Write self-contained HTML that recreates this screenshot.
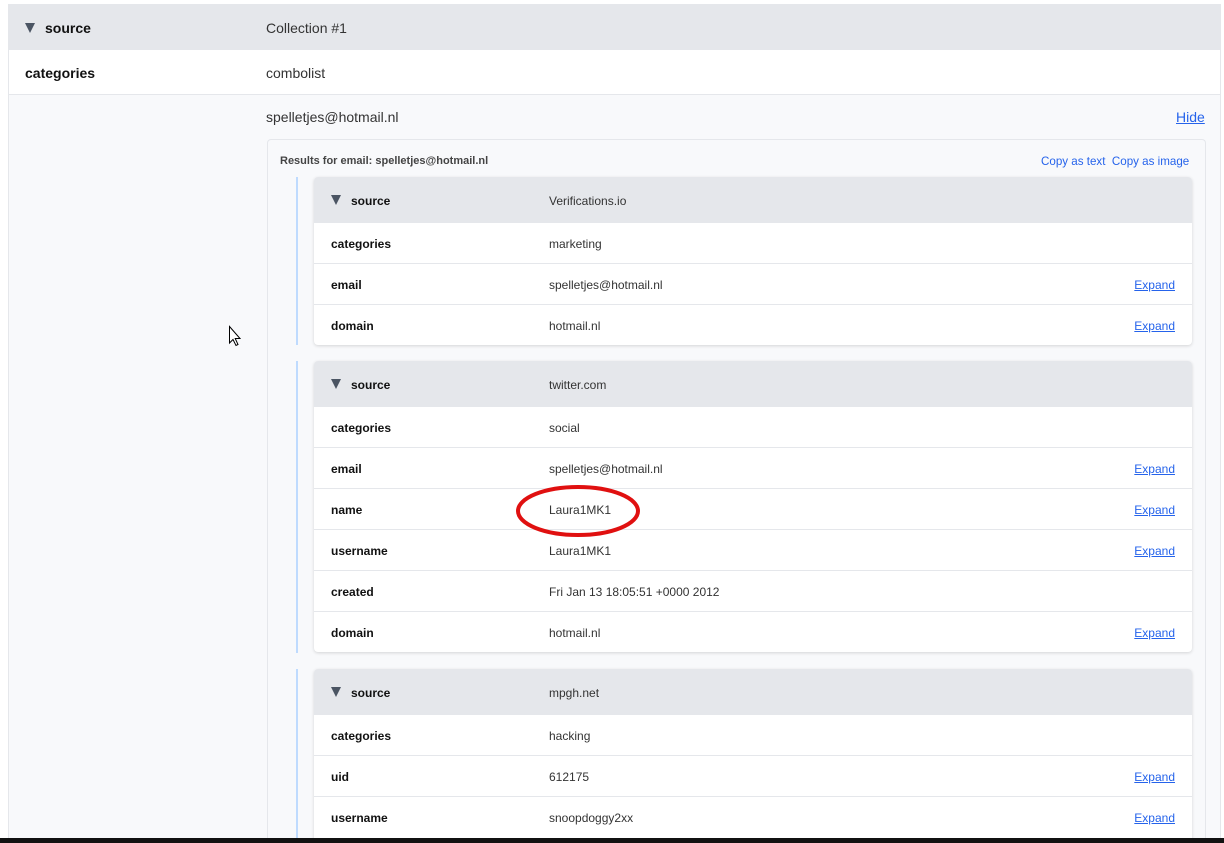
<!DOCTYPE html>
<html style="width:1224px;height:843px;overflow:hidden"><head><meta charset="utf-8"><style>
*{box-sizing:border-box;margin:0;padding:0}
body{width:1224px;height:843px;overflow:hidden;background:#fff;font-family:"Liberation Sans",sans-serif;color:#222;position:relative}
.a{position:absolute}
.row{position:absolute;display:flex;align-items:center}
.k{font-weight:bold;color:#111}
.lnk{color:#2563eb;text-decoration:underline}
.tri{display:inline-block;width:0;height:0;border-left:5px solid transparent;border-right:5px solid transparent;border-top:10px solid #4b5563;margin-right:10px}
.t{position:absolute;left:314px;width:878px;background:#fff;border-radius:4px;box-shadow:0 1px 3px rgba(0,0,0,.15);overflow:hidden}
.t .r{height:41px;border-top:1px solid #e5e7eb;display:flex;align-items:center;font-size:12px;position:relative;padding-top:2px}
.t .r.h{background:#e5e7eb;height:45px;border-top:none}
.t .c1{position:absolute;left:17px;font-weight:bold;color:#111}
.t .c2{position:absolute;left:235px;color:#333}
.t .c3{position:absolute;right:17px;color:#2563eb;text-decoration:underline}
.bar{position:absolute;left:296px;width:2px;background:#bfdbfe}
</style></head><body>
<div class="a" style="left:8px;top:4px;width:1213px;height:839px;border:1px solid #e5e7eb;background:#f8f9fb"></div>
<div class="a" style="left:9px;top:5px;width:1211px;height:45px;background:#e5e7eb"></div>
<div class="a" style="left:9px;top:50px;width:1211px;height:45px;background:#fff;border-bottom:1px solid #e5e7eb"></div>
<div class="row k" style="left:25px;top:5px;height:45px;font-size:14px"><span class="tri"></span>source</div>
<div class="row" style="left:266px;top:5px;height:45px;font-size:14px;color:#333">Collection #1</div>
<div class="row k" style="left:25px;top:50px;height:45px;font-size:14px">categories</div>
<div class="row" style="left:266px;top:50px;height:45px;font-size:14px;color:#333">combolist</div>
<div class="row" style="left:266px;top:106px;height:22px;font-size:14px;color:#333">spelletjes@hotmail.nl</div>
<div class="row lnk" style="left:1176px;top:106px;height:22px;font-size:14px">Hide</div>
<div class="a" style="left:267px;top:139px;width:939px;height:704px;border:1px solid #e5e7eb;border-bottom:none;border-radius:4px 4px 0 0;background:#f8f9fb"></div>
<div class="row" style="left:280px;top:152px;height:18px;font-size:11px;font-weight:bold;color:#444">Results for email: spelletjes@hotmail.nl</div>
<div class="row" style="left:1041px;top:152px;height:18px;font-size:11.6px;color:#2563eb">Copy as text&nbsp;&nbsp;Copy as image</div>

<div class="bar" style="top:177px;height:168px"></div>
<div class="t" style="top:177px">
<div class="r h"><span class="c1"><span class="tri"></span>source</span><span class="c2">Verifications.io</span></div>
<div class="r"><span class="c1">categories</span><span class="c2">marketing</span></div>
<div class="r"><span class="c1">email</span><span class="c2">spelletjes@hotmail.nl</span><span class="c3">Expand</span></div>
<div class="r"><span class="c1">domain</span><span class="c2">hotmail.nl</span><span class="c3">Expand</span></div>
</div>

<div class="bar" style="top:361px;height:292px"></div>
<div class="t" style="top:361px">
<div class="r h"><span class="c1"><span class="tri"></span>source</span><span class="c2">twitter.com</span></div>
<div class="r"><span class="c1">categories</span><span class="c2">social</span></div>
<div class="r"><span class="c1">email</span><span class="c2">spelletjes@hotmail.nl</span><span class="c3">Expand</span></div>
<div class="r"><span class="c1">name</span><span class="c2">Laura1MK1</span><span class="c3">Expand</span></div>
<div class="r"><span class="c1">username</span><span class="c2">Laura1MK1</span><span class="c3">Expand</span></div>
<div class="r"><span class="c1">created</span><span class="c2">Fri Jan 13 18:05:51 +0000 2012</span></div>
<div class="r"><span class="c1">domain</span><span class="c2">hotmail.nl</span><span class="c3">Expand</span></div>
</div>

<div class="bar" style="top:669px;height:174px"></div>
<div class="t" style="top:669px;height:174px;border-radius:4px 4px 0 0">
<div class="r h"><span class="c1"><span class="tri"></span>source</span><span class="c2">mpgh.net</span></div>
<div class="r"><span class="c1">categories</span><span class="c2">hacking</span></div>
<div class="r"><span class="c1">uid</span><span class="c2">612175</span><span class="c3">Expand</span></div>
<div class="r"><span class="c1">username</span><span class="c2">snoopdoggy2xx</span><span class="c3">Expand</span></div>
</div>

<svg class="a" style="left:0;top:0" width="1224" height="843">
<ellipse cx="578" cy="511" rx="60" ry="24" fill="none" stroke="#e01010" stroke-width="4"/>
<path d="M229.5 326.5 L229.5 343 L233 339.5 L236 345.5 L238 344.5 L235.2 338.5 L240 338.5 Z" fill="#fff" stroke="#000" stroke-width="1"/>
</svg>
<div class="a" style="left:0;top:838px;width:1224px;height:5px;background:#111"></div>
</body></html>
